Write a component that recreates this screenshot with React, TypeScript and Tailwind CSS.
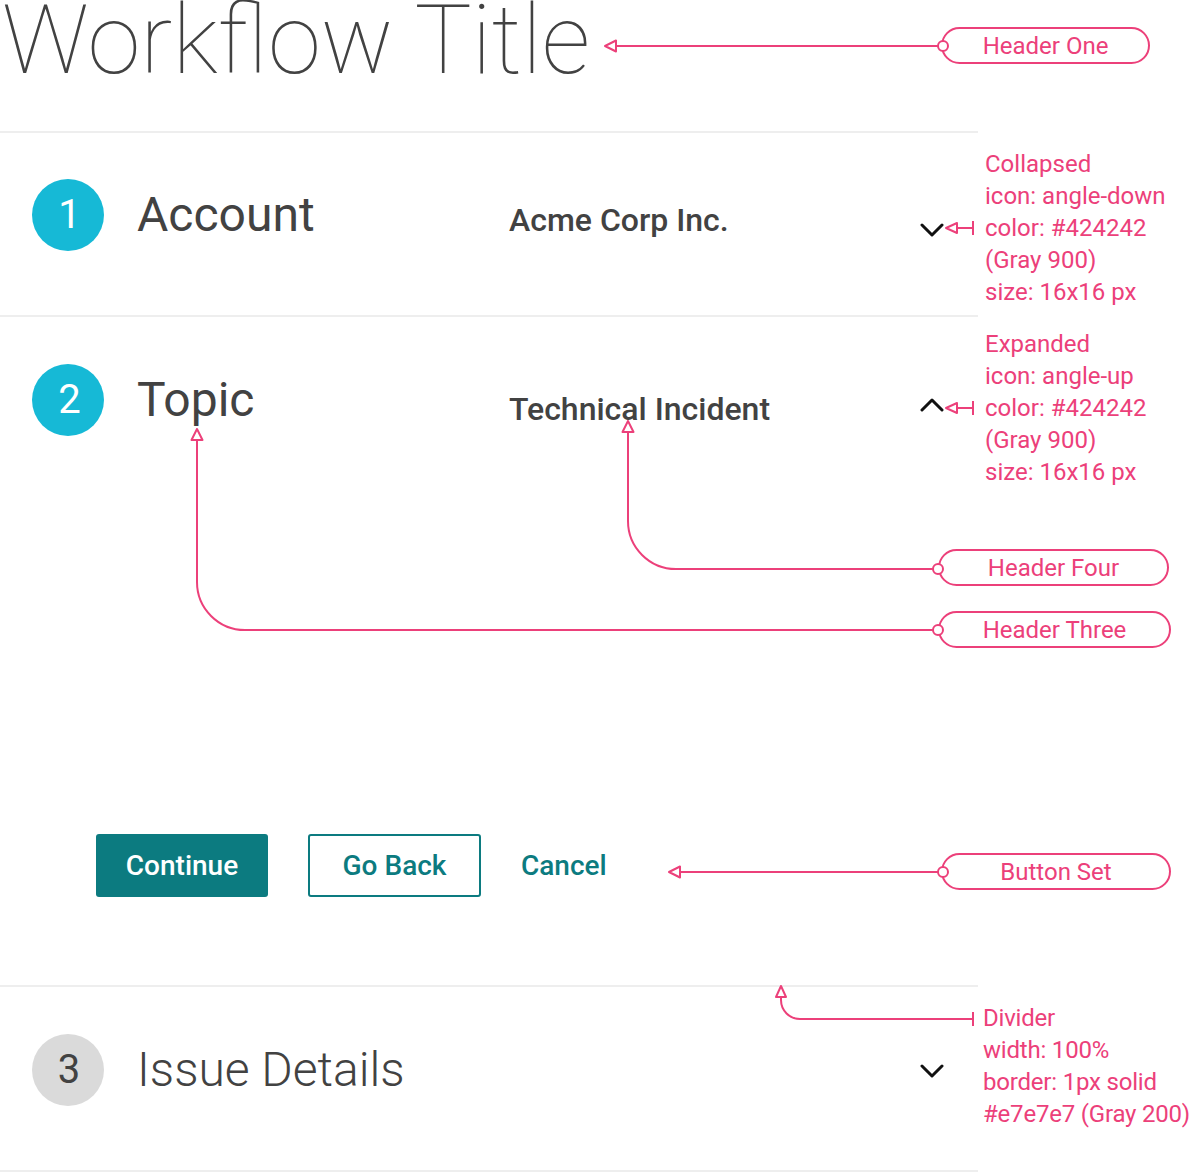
import React from 'react';

const PINK = '#ec407a';

const Chevron = ({ up = false, className = '' }: { up?: boolean; className?: string }) => (
  <svg width="24" height="16" viewBox="0 0 24 16" className={className}>
    <polyline
      points={up ? '2,13 12,3 22,13' : '2,3 12,13 22,3'}
      fill="none"
      stroke="#111111"
      strokeWidth="3"
      strokeLinecap="round"
      strokeLinejoin="round"
    />
  </svg>
);

const Divider = () => <div className="h-[2px] bg-[#eeeeee]" />;

type StepProps = {
  num: number;
  title: string;
  value?: string;
  active?: boolean;
  expanded?: boolean;
  chevronClass?: string;
  valueClass?: string;
};

const StepHeader = ({
  num,
  title,
  value,
  active = true,
  expanded = false,
  chevronClass = '',
  valueClass = '',
}: StepProps) => (
  <div className="flex items-center pl-8">
    <div
      className={
        active
          ? 'w-[72px] h-[72px] rounded-full bg-[#16b9d6] text-white flex items-center justify-center pl-[3px] text-[40px] leading-none shrink-0'
          : 'w-[72px] h-[72px] rounded-full bg-[#dadada] text-[#424242] flex items-center justify-center pl-[2px] text-[40px] leading-none shrink-0'
      }
    >
      {num}
    </div>
    <div className="flex items-baseline flex-1 ml-[33px]">
      <div
        className={
          active
            ? 'w-[372px] text-[48px] leading-[48px] text-[#424242] font-normal'
            : 'w-[372px] text-[48px] leading-[48px] text-[#424242] font-light'
        }
      >
        {title}
      </div>
      {value && (
        <div className={'text-[32px] leading-[32px] font-medium text-[#424242] ' + valueClass}>{value}</div>
      )}
    </div>
    <Chevron up={expanded} className={'mr-[34px] ' + chevronClass} />
  </div>
);

const Pill = ({ label, className }: { label: string; className: string }) => (
  <div
    className={
      'absolute h-[37px] rounded-full border-2 border-[#ec407a] bg-white flex items-center justify-center text-[24px] text-[#ec407a] ' +
      className
    }
  >
    {label}
  </div>
);

const Note = ({ lines, className }: { lines: string[]; className: string }) => (
  <div className={'absolute text-[24px] leading-[32px] text-[#ec407a] whitespace-nowrap ' + className}>
    {lines.map((l) => (
      <div key={l}>{l}</div>
    ))}
  </div>
);

export default function App() {
  return (
    <div className="relative w-[1192px] h-[1172px] bg-white overflow-hidden font-['Roboto',sans-serif]">
      <div className="w-[978px]">
        <div className="h-[131px]">
          <h1 className="text-[96px] leading-[80px] font-thin text-[#424242] pl-[2px] whitespace-nowrap">
            Workflow Title
          </h1>
        </div>
        <Divider />

        <div className="pt-[46px] pb-[64px]">
          <StepHeader num={1} title="Account" value="Acme Corp Inc." chevronClass="mt-[30px]" />
        </div>
        <Divider />

        <div className="pt-[47px] pb-[88px]">
          <StepHeader
            num={2}
            title="Topic"
            value="Technical Incident"
            expanded
            chevronClass="mt-[10px]"
            valueClass="translate-y-[4px]"
          />
          <div className="flex items-center gap-10 pl-[96px] mt-[398px]">
            <button className="w-[172px] h-[63px] rounded-[3px] bg-[#0c7b80] text-white text-[28px] font-medium">
              Continue
            </button>
            <button className="w-[173px] h-[63px] rounded-[3px] border-2 border-[#0c7b80] text-[#0c7b80] text-[28px] font-medium">
              Go Back
            </button>
            <button className="h-[63px] text-[#0c7b80] text-[28px] font-medium">Cancel</button>
          </div>
        </div>
        <Divider />

        <div className="pt-[47px] pb-[64px]">
          <StepHeader num={3} title="Issue Details" active={false} chevronClass="mt-[2px]" />
        </div>
        <Divider />
      </div>

      <Pill label="Header One" className="left-[941px] top-[27px] w-[209px]" />
      <Pill label="Header Four" className="left-[938px] top-[549px] w-[231px]" />
      <Pill label="Header Three" className="left-[938px] top-[611px] w-[233px]" />
      <Pill label="Button Set" className="left-[941px] top-[853px] w-[230px]" />

      <Note
        lines={['Collapsed', 'icon: angle-down', 'color: #424242', '(Gray 900)', 'size: 16x16 px']}
        className="left-[985px] top-[148px]"
      />
      <Note
        lines={['Expanded', 'icon: angle-up', 'color: #424242', '(Gray 900)', 'size: 16x16 px']}
        className="left-[985px] top-[328px]"
      />
      <Note
        lines={['Divider', 'width: 100%', 'border: 1px solid', '#e7e7e7 (Gray 200)']}
        className="left-[983px] top-[1002px] tracking-[-0.2px]"
      />

      <svg className="absolute inset-0 pointer-events-none" width="1192" height="1172" viewBox="0 0 1192 1172">
        <g fill="none" stroke={PINK} strokeWidth="2">
          <path d="M938 46 H616" />
          <path d="M957 228 H973 M973 221 V235" />
          <path d="M957 408 H973 M973 401 V415" />
          <path d="M933 569 H676 A48 48 0 0 1 628 521 V432" />
          <path d="M933 630 H245 A48 48 0 0 1 197 582 V440" />
          <path d="M938 872 H680" />
          <path d="M973 1019 H800 A19 19 0 0 1 781 1000 V997 M973 1012 V1026" />
        </g>
        <g fill="white" stroke={PINK} strokeWidth="2" strokeLinejoin="round">
          <path d="M605 46 L616 40.5 L616 51.5 Z" />
          <path d="M946 228 L957 223 L957 233 Z" />
          <path d="M946 408 L957 403 L957 413 Z" />
          <path d="M628 421 L622.5 432 L633.5 432 Z" />
          <path d="M197 429 L191.5 440 L202.5 440 Z" />
          <path d="M669 872 L680 866.5 L680 877.5 Z" />
          <path d="M781 986 L776 997 L786 997 Z" />
          <circle cx="943" cy="46" r="5" />
          <circle cx="938" cy="569" r="5" />
          <circle cx="938" cy="630" r="5" />
          <circle cx="943" cy="872" r="5" />
        </g>
      </svg>
    </div>
  );
}
